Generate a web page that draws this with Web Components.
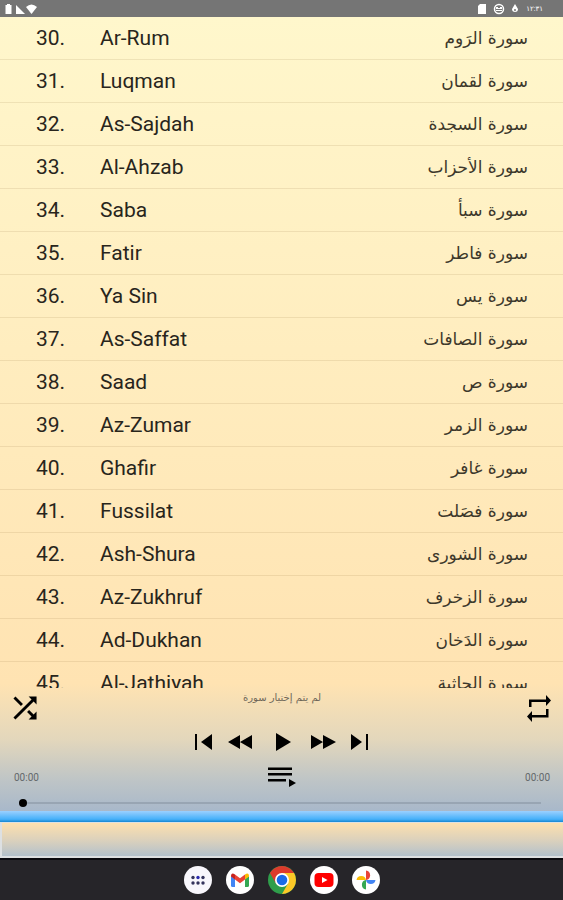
<!DOCTYPE html>
<html lang="en">
    <head>
        <meta charset="UTF-8" />
        <meta name="viewport" content="width=device-width, initial-scale=1.0" />
        <title>Quran Player</title>
        <style>
            body {
                margin: 0;
                font-family: Roboto, "DejaVu Sans", sans-serif;
            }
        </style>
    </head>
    <body>
        <quran-app></quran-app>

        <template id="status-bar">
            <style>
                :host {
                    display: flex;
                    align-items: center;
                    justify-content: space-between;
                    height: 17px;
                    padding: 0 20px 0 4px;
                    background: #757575;
                    color: #fff;
                    font-size: 7px;
                }
                div {
                    display: flex;
                    align-items: center;
                    gap: 8px;
                }
                svg {
                    display: block;
                    fill: #fff;
                }
            </style>
            <svg width="34" height="12" viewBox="0 0 34 12">
                <path d="M3 2V1h3v1h1.500v9h-6V2z" />
                <path d="M12 2v9h9z" />
                <path d="M22 4q5.500-5 11 0l-5.500 7z" />
            </svg>
            <div>
                <svg width="42" height="12" viewBox="0 0 42 12">
                    <path d="M4 1h6v10H2V3z" />
                    <circle cx="23" cy="6" r="4.500" fill="none" stroke="#fff" stroke-width="1.500" />
                    <path d="M20 4h2v1h2V4h2v2h-6zM20 7h6v1h-6z" />
                    <path d="M39 1l3 5a3 3 0 1 1-6 0z" />
                    <circle cx="39" cy="7" r="1" fill="#757575" />
                </svg>
                <span>١٢:٣١</span>
            </div>
        </template>

        <template id="surah-row">
            <style>
                :host {
                    display: flex;
                    align-items: center;
                    box-sizing: border-box;
                    height: 43px;
                    padding: 0 35px 0 36px;
                    border-bottom: 1px solid rgba(120, 90, 40, 0.12);
                    color: #28251c;
                    font-size: 21px;
                }
                .number {
                    width: 64px;
                }
                .arabic {
                    margin-left: auto;
                    color: #3d382b;
                    font-family: "DejaVu Sans", sans-serif;
                    font-size: 17px;
                }
            </style>
            <span class="number"><slot name="number"></slot></span>
            <slot></slot>
            <span class="arabic" lang="ar" dir="rtl"><slot name="arabic"></slot></span>
        </template>

        <template id="surah-list">
            <style>
                :host {
                    display: block;
                    flex: 1;
                    min-height: 0;
                    overflow: hidden;
                }
            </style>
            <slot></slot>
        </template>

        <template id="icon-button">
            <style>
                :host {
                    display: block;
                }
                button {
                    display: block;
                    padding: 0;
                    border: 0;
                    background: none;
                    color: #000;
                    cursor: pointer;
                }
            </style>
            <button type="button"><slot></slot></button>
        </template>

        <template id="audio-player">
            <style>
                :host {
                    display: block;
                    padding: 0 11px 3px 12px;
                }
                svg {
                    display: block;
                    fill: currentColor;
                }
                .row {
                    display: flex;
                    align-items: center;
                    justify-content: space-between;
                }
                .top {
                    height: 40px;
                }
                .title {
                    align-self: flex-start;
                    padding-top: 4px;
                    color: #6f675a;
                    font-family: "DejaVu Sans", sans-serif;
                    font-size: 10px;
                }
                .transport {
                    height: 28px;
                    justify-content: center;
                }
                .times {
                    height: 42px;
                    padding: 0 2px;
                    color: #63686b;
                    font-size: 10px;
                }
                input {
                    display: block;
                    appearance: none;
                    box-sizing: border-box;
                    width: calc(100% - 18px);
                    height: 10px;
                    margin: 0 0 0 7px;
                    background: linear-gradient(#98a5b3, #98a5b3) center / 100% 2px no-repeat;
                }
                input::-webkit-slider-thumb {
                    appearance: none;
                    width: 8px;
                    height: 8px;
                    border-radius: 50%;
                    background: #000;
                }
            </style>
            <div class="row top">
                <icon-button label="Shuffle">
                    <svg width="26" height="26" viewBox="3 3 18 18">
                        <path d="M10.590 9.170L5.410 4 4 5.410l5.170 5.170zM14.500 4l2.040 2.040L4 18.590 5.410 20 17.960 7.460 20 9.500V4zM14.830 13.410l-1.410 1.410 3.130 3.130L14.500 20H20v-5.500l-2.040 2.040z" />
                    </svg>
                </icon-button>
                <span class="title" lang="ar" dir="rtl">لم يتم إختيار سورة</span>
                <icon-button label="Repeat">
                    <svg width="26" height="28" viewBox="0 0 26 28">
                        <path d="M3 13V5.500h17V1l5 5.500-5 5.500V8H5.500V13zM22.500 15v8.500H6V28l-5-5.500L6 17v4h14v-6z" />
                    </svg>
                </icon-button>
            </div>
            <div class="row transport">
                <icon-button label="Previous">
                    <svg width="39" height="24" viewBox="0 0 39 24">
                        <path d="M10 4h2v16h-2zM27 4v16l-11-8z" />
                    </svg>
                </icon-button>
                <icon-button label="Rewind">
                    <svg width="39" height="24" viewBox="0 0 39 24">
                        <path d="M16 5v14L4 12zM28 5v14l-12-7z" />
                    </svg>
                </icon-button>
                <icon-button label="Play">
                    <svg width="39" height="24" viewBox="0 0 39 24">
                        <path d="M13 3l15 9-15 9z" />
                    </svg>
                </icon-button>
                <icon-button label="Fast forward">
                    <svg width="39" height="24" viewBox="0 0 39 24">
                        <path d="M9 5l12 7-12 7zM21 5l13 7-13 7z" />
                    </svg>
                </icon-button>
                <icon-button label="Next">
                    <svg width="39" height="24" viewBox="0 0 39 24">
                        <path d="M10 4l11 8-11 8zM25 4h2v16h-2z" />
                    </svg>
                </icon-button>
            </div>
            <div class="row times">
                <span>00:00</span>
                <icon-button label="Queue">
                    <svg width="30" height="24" viewBox="0 0 30 24">
                        <path d="M1 2.500h24V5H1zM1 8h24v2.500H1zM1 14h18v2.500H1zM22 14l7 4-7 4z" />
                    </svg>
                </icon-button>
                <span>00:00</span>
            </div>
            <input type="range" min="0" max="100" value="0" aria-label="Position" />
        </template>

        <template id="app-dock">
            <style>
                :host {
                    display: flex;
                    align-items: center;
                    justify-content: center;
                    gap: 14px;
                    box-sizing: border-box;
                    height: 42px;
                    border-top: 2px solid #0b0b10;
                    background: #262529;
                }
                svg {
                    display: block;
                }
            </style>
            <icon-button label="All apps">
                <svg width="28" height="28" viewBox="0 0 28 28">
                    <circle cx="14" cy="14" r="14" fill="#f8f7fc" />
                    <g fill="#34345c">
                        <circle cx="9" cy="11.500" r="1.700" />
                        <circle cx="14" cy="11.500" r="1.700" fill="#2b2bb0" />
                        <circle cx="19" cy="11.500" r="1.700" />
                        <circle cx="9" cy="17" r="1.700" />
                        <circle cx="14" cy="17" r="1.700" />
                        <circle cx="19" cy="17" r="1.700" />
                    </g>
                </svg>
            </icon-button>
            <icon-button label="Gmail">
                <svg width="28" height="28" viewBox="0 0 28 28">
                    <circle cx="14" cy="14" r="14" fill="#fff" />
                    <path d="M5 10l4 3v8H6.500Q5 21 5 19.500z" fill="#4285f4" />
                    <path d="M23 10l-4 3v8h2.500q1.500 0 1.500-1.500z" fill="#34a853" />
                    <path d="M9 8.500l5 3.700 5-3.700V13.500l-5 3.800-5-3.800z" fill="#ea4335" />
                    <path d="M5 9.500Q5.500 6 9 8.500v5l-4-3z" fill="#c5221f" />
                    <path d="M23 9.500Q22.500 6 19 8.500v5l4-3z" fill="#fbbc04" />
                </svg>
            </icon-button>
            <icon-button label="Chrome">
                <svg width="28" height="28" viewBox="0 0 28 28">
                    <circle cx="14" cy="14" r="14" fill="#2f9e4b" />
                    <path d="M1.900 7A14 14 0 0 1 26.100 7H14L8 17.500z" fill="#dc3a2c" />
                    <path d="M26.100 7A14 14 0 0 1 14 28l6-10.500L14 7z" fill="#fcc827" />
                    <circle cx="14" cy="14" r="7" fill="#fff" />
                    <circle cx="14" cy="14" r="5.300" fill="#1a6be8" />
                </svg>
            </icon-button>
            <icon-button label="YouTube">
                <svg width="28" height="28" viewBox="0 0 28 28">
                    <circle cx="14" cy="14" r="14" fill="#fff" />
                    <rect x="4.500" y="7" width="19" height="14" rx="4" fill="#f00" />
                    <path d="M12 11l5.500 3-5.500 3z" fill="#fff" />
                </svg>
            </icon-button>
            <icon-button label="Photos">
                <svg width="28" height="28" viewBox="0 0 28 28">
                    <circle cx="14" cy="14" r="14" fill="#fff" />
                    <path d="M14 4.500a4.800 4.800 0 0 1 0 9.500z" fill="#ea4335" />
                    <path d="M23.500 14a4.800 4.800 0 0 1-9.500 0z" fill="#4285f4" />
                    <path d="M14 23.500a4.800 4.800 0 0 1 0-9.500z" fill="#34a853" />
                    <path d="M4.500 14a4.800 4.800 0 0 1 9.500 0z" fill="#fbbc04" />
                </svg>
            </icon-button>
        </template>

        <template id="quran-app">
            <style>
                :host {
                    display: flex;
                    flex-direction: column;
                    height: 100vh;
                }
                main {
                    display: flex;
                    flex: 1;
                    flex-direction: column;
                    min-height: 0;
                    background: linear-gradient(#fff7cc, #ffe3b2 84%, #e3d7bc 91%, #bfc5c6 96%, #a8b8ca);
                }
                .accent {
                    height: 11px;
                    background: linear-gradient(#9bd0ff, #45b0fa 75%, #1686cf);
                }
                .banner {
                    box-sizing: border-box;
                    height: 36px;
                    border: solid #dde0e2;
                    border-width: 1px 0 2px 2px;
                    background: linear-gradient(#fde0ae, #d9d0bd 55%, #b3c1cc);
                }
            </style>
            <status-bar></status-bar>
            <main>
                <surah-list></surah-list>
                <audio-player></audio-player>
            </main>
            <div class="accent"></div>
            <div class="banner"></div>
            <app-dock></app-dock>
        </template>

        <script>
            const surahs = [
                [30, "Ar-Rum", "سورة الرَوم"],
                [31, "Luqman", "سورة لقمان"],
                [32, "As-Sajdah", "سورة السجدة"],
                [33, "Al-Ahzab", "سورة الأحزاب"],
                [34, "Saba", "سورة سبأ"],
                [35, "Fatir", "سورة فاطر"],
                [36, "Ya Sin", "سورة يس"],
                [37, "As-Saffat", "سورة الصافات"],
                [38, "Saad", "سورة ص"],
                [39, "Az-Zumar", "سورة الزمر"],
                [40, "Ghafir", "سورة غافر"],
                [41, "Fussilat", "سورة فصَلت"],
                [42, "Ash-Shura", "سورة الشورى"],
                [43, "Az-Zukhruf", "سورة الزخرف"],
                [44, "Ad-Dukhan", "سورة الدَخان"],
                [45, "Al-Jathiyah", "سورة الجاثية"],
            ];

            // Base class: clones the template named after the tag
            class TemplateElement extends HTMLElement {
                constructor() {
                    super();
                    const template = document.getElementById(this.localName);
                    this.attachShadow({ mode: "open" }).appendChild(template.content.cloneNode(true));
                }
            }

            class StatusBar extends TemplateElement {}
            class SurahRow extends TemplateElement {}
            class AudioPlayer extends TemplateElement {}
            class AppDock extends TemplateElement {}
            class QuranApp extends TemplateElement {}

            class IconButton extends TemplateElement {
                connectedCallback() {
                    const button = this.shadowRoot.querySelector("button");
                    button.setAttribute("aria-label", this.getAttribute("label"));
                }
            }

            class SurahList extends TemplateElement {
                connectedCallback() {
                    for (const [number, name, arabic] of surahs) {
                        const row = document.createElement("surah-row");
                        row.innerHTML = `<span slot="number">${number}.</span>${name}<span slot="arabic">${arabic}</span>`;
                        this.appendChild(row);
                    }
                }
            }

            customElements.define("icon-button", IconButton);
            customElements.define("status-bar", StatusBar);
            customElements.define("surah-row", SurahRow);
            customElements.define("surah-list", SurahList);
            customElements.define("audio-player", AudioPlayer);
            customElements.define("app-dock", AppDock);
            customElements.define("quran-app", QuranApp);
        </script>
    </body>
</html>
